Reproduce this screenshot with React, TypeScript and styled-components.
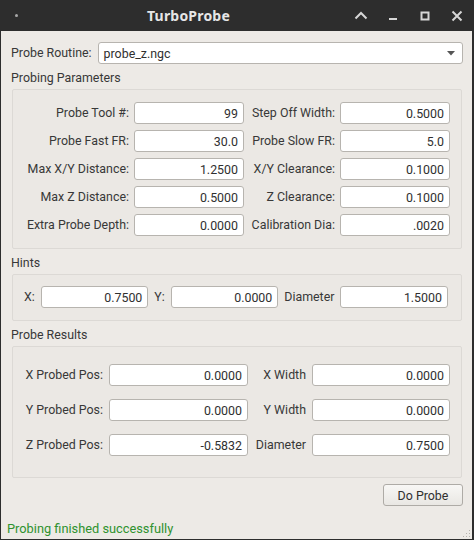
import React from "react";
import styled, { createGlobalStyle } from "styled-components";

const Global = createGlobalStyle`
  html, body { margin: 0; padding: 0; background: #2d2d2d; }
  body { font-family: Roboto, "Liberation Sans", sans-serif; }
  * { box-sizing: border-box; }
`;

const Window = styled.div`
  width: 474px;
  height: 540px;
  display: flex;
  flex-direction: column;
  background: #edeae6;
  border-left: 1px solid #2d2d2d;
  border-right: 2px solid #2d2d2d;
  border-bottom: 1px solid #2d2d2d;
  position: relative;
  font-family: Roboto, "Liberation Sans", sans-serif;
  font-size: 12.4px;
  color: #383838;
`;

const TitleBar = styled.div`
  height: 31px;
  flex: none;
  display: flex;
  align-items: center;
  background: #2d2d2d;
  margin-left: -1px;
  margin-right: -2px;
  padding-left: 15px;
  padding-right: 1px;
`;

const MenuDot = styled.span`
  width: 3px;
  height: 3px;
  border-radius: 50%;
  background: #a8a8a8;
  flex: none;
`;

const Title = styled.div`
  flex: 1;
  text-align: center;
  padding-left: 14px;
  font-family: "Noto Sans", Roboto, sans-serif;
  font-weight: 700;
  font-size: 14px;
  color: #e6e6e6;
  letter-spacing: 0.2px;
`;

const WinButton = styled.div`
  width: 32px;
  height: 31px;
  display: flex;
  align-items: center;
  justify-content: center;
  flex: none;
`;

const Content = styled.div`
  flex: 1;
  display: flex;
  flex-direction: column;
  padding: 11px 9px 0 10px;
`;

const RoutineRow = styled.div`
  display: flex;
  align-items: center;
  gap: 6px;
  height: 22px;
`;

const Label = styled.span<{ $align?: "left" | "right" }>`
  white-space: nowrap;
  text-align: ${(p) => p.$align ?? "left"};
  line-height: 22px;
  color: #383838;
`;

const Combo = styled.div`
  flex: 1;
  height: 22px;
  display: flex;
  align-items: center;
  justify-content: space-between;
  padding: 0 7px 0 5px;
  background: #ffffff;
  border: 1px solid #b7b4af;
  border-radius: 3px;
  color: #303030;
`;

const SectionTitle = styled.div`
  margin-top: 6px;
  margin-bottom: 3px;
  line-height: 16px;
  color: #383838;
`;

const Group = styled.div`
  margin: 0 1px 0 1px;
  border: 1px solid #dcd9d5;
  border-radius: 2px;
  background: #ebe8e4;
`;

const ParamGrid = styled(Group)`
  display: grid;
  grid-template-columns: 104px 110px 86px 110px;
  grid-auto-rows: 22px;
  column-gap: 5px;
  row-gap: 6px;
  padding: 12px 11px 12px 12px;
`;

const HintsRow = styled(Group)`
  display: flex;
  align-items: center;
  gap: 6px;
  padding: 11px 13px 12px 11px;
`;

const ResultsGrid = styled(Group)`
  display: grid;
  grid-template-columns: 79px 139px 52px 138px;
  grid-auto-rows: 22px;
  column-gap: 6px;
  row-gap: 13px;
  padding: 17px 11px 21px 11px;
`;

const Field = styled.div<{ $flex?: boolean }>`
  height: 22px;
  ${(p) => (p.$flex ? "flex: 1; min-width: 0;" : "")}
  display: flex;
  align-items: center;
  justify-content: flex-end;
  padding: 0 5px;
  background: #ffffff;
  border: 1px solid #b7b4af;
  border-radius: 3px;
  color: #303030;
`;

const ButtonRow = styled.div`
  display: flex;
  justify-content: flex-end;
  margin-top: 6px;
`;

const PushButton = styled.div`
  width: 80px;
  height: 22px;
  display: flex;
  align-items: center;
  justify-content: center;
  border: 1px solid #aeaba6;
  border-radius: 3px;
  background: linear-gradient(#f8f7f5, #e9e7e3);
  color: #303030;
`;

const StatusBar = styled.div`
  height: 18px;
  flex: none;
  padding: 0 6px;
  line-height: 16px;
  font-size: 12.8px;
  color: #2f922f;
`;

const Grip = styled.svg`
  position: absolute;
  right: 1px;
  bottom: 1px;
`;

const params: [string, string, string, string][] = [
  ["Probe Tool #:", "99", "Step Off Width:", "0.5000"],
  ["Probe Fast FR:", "30.0", "Probe Slow FR:", "5.0"],
  ["Max X/Y Distance:", "1.2500", "X/Y Clearance:", "0.1000"],
  ["Max Z Distance:", "0.5000", "Z Clearance:", "0.1000"],
  ["Extra Probe Depth:", "0.0000", "Calibration Dia:", ".0020"],
];

const results: [string, string, string, string][] = [
  ["X Probed Pos:", "0.0000", "X Width", "0.0000"],
  ["Y Probed Pos:", "0.0000", "Y Width", "0.0000"],
  ["Z Probed Pos:", "-0.5832", "Diameter", "0.7500"],
];

const iconColor = "#d6d6d6";

export default function App() {
  return (
    <>
      <Global />
      <Window>
        <TitleBar>
          <MenuDot />
          <Title>TurboProbe</Title>
          <WinButton>
            <svg width="14" height="10" viewBox="0 0 14 10">
              <polyline points="1.5,7.5 7,2 12.5,7.5" fill="none" stroke={iconColor} strokeWidth="2" />
            </svg>
          </WinButton>
          <WinButton>
            <svg width="10" height="10" viewBox="0 0 10 10">
              <rect x="1" y="7" width="8" height="2" fill={iconColor} />
            </svg>
          </WinButton>
          <WinButton>
            <svg width="10" height="10" viewBox="0 0 10 10">
              <rect x="1.5" y="1.5" width="7" height="7" fill="none" stroke={iconColor} strokeWidth="2" />
            </svg>
          </WinButton>
          <WinButton>
            <svg width="12" height="12" viewBox="0 0 12 12">
              <path d="M1.5 1.5 L10.5 10.5 M10.5 1.5 L1.5 10.5" stroke={iconColor} strokeWidth="2" />
            </svg>
          </WinButton>
        </TitleBar>
        <Content>
          <RoutineRow>
            <Label>Probe Routine:</Label>
            <Combo>
              <span>probe_z.ngc</span>
              <svg width="8" height="5" viewBox="0 0 8 5">
                <polygon points="0,0 8,0 4,4.5" fill="#555" />
              </svg>
            </Combo>
          </RoutineRow>

          <SectionTitle>Probing Parameters</SectionTitle>
          <ParamGrid>
            {params.map(([l1, v1, l2, v2]) => (
              <React.Fragment key={l1}>
                <Label $align="right">{l1}</Label>
                <Field>{v1}</Field>
                <Label $align="right">{l2}</Label>
                <Field>{v2}</Field>
              </React.Fragment>
            ))}
          </ParamGrid>

          <SectionTitle>Hints</SectionTitle>
          <HintsRow>
            <Label>X:</Label>
            <Field $flex>0.7500</Field>
            <Label>Y:</Label>
            <Field $flex>0.0000</Field>
            <Label>Diameter</Label>
            <Field $flex>1.5000</Field>
          </HintsRow>

          <SectionTitle>Probe Results</SectionTitle>
          <ResultsGrid>
            {results.map(([l1, v1, l2, v2]) => (
              <React.Fragment key={l1}>
                <Label $align="right">{l1}</Label>
                <Field>{v1}</Field>
                <Label $align="right">{l2}</Label>
                <Field>{v2}</Field>
              </React.Fragment>
            ))}
          </ResultsGrid>

          <ButtonRow>
            <PushButton>Do Probe</PushButton>
          </ButtonRow>
        </Content>
        <StatusBar>Probing finished successfully</StatusBar>
        <Grip width="10" height="10" viewBox="0 0 10 10">
          {[
            [8, 2], [5, 5], [8, 5], [2, 8], [5, 8], [8, 8],
          ].map(([x, y]) => (
            <rect key={`${x}-${y}`} x={x} y={y} width="1" height="1" fill="#b5b2ad" />
          ))}
        </Grip>
      </Window>
    </>
  );
}
